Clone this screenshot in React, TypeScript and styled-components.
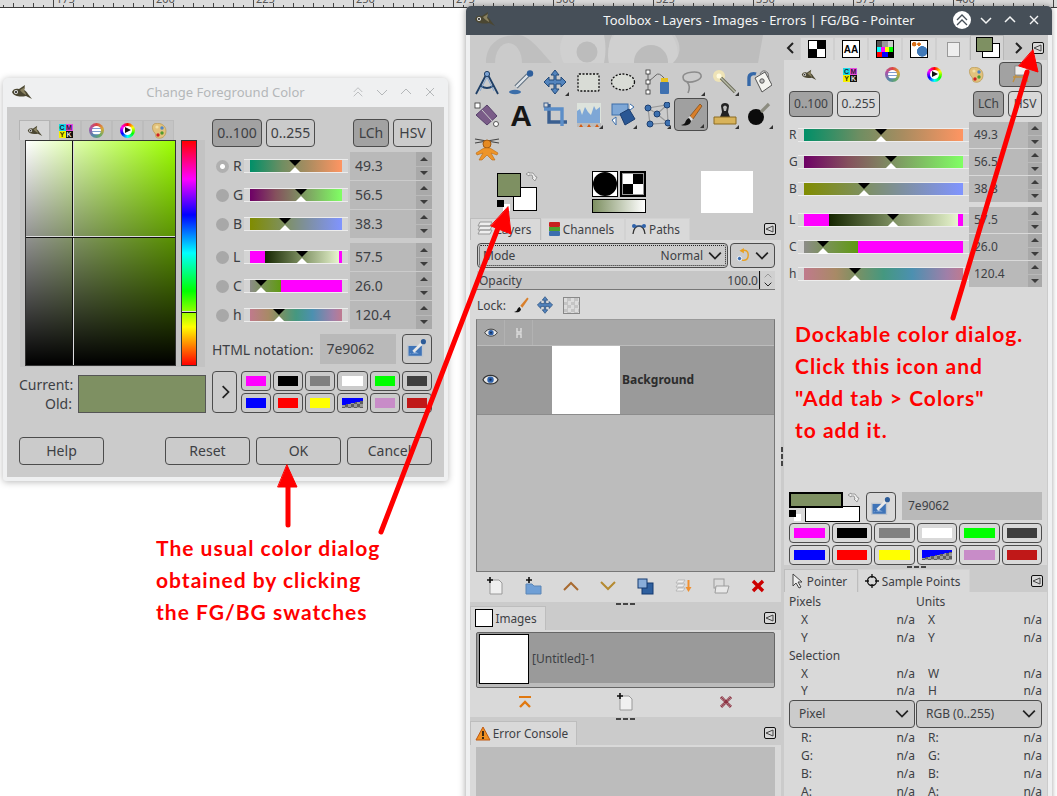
import React from "react";
import styled, { createGlobalStyle } from "styled-components";

const GlobalStyle = createGlobalStyle`
  html, body { margin: 0; padding: 0; background: #fff; }
  * { box-sizing: border-box; }
`;

const INK = "#3d4044";

const Desktop = styled.div`
  position: relative;
  width: 1057px;
  height: 796px;
  overflow: hidden;
  background: #fff;
  font-family: "Noto Sans", sans-serif;
  color: ${INK};
`;

const RulerSvg = styled.svg`
  display: block;
  width: 1057px;
  height: 8px;
  background: #dcdcdc;
`;

/* ---------- shared widgets ---------- */

const Btn = styled.div<{ $on?: boolean; $w?: number; $h?: number; $fs?: number }>`
  display: flex;
  align-items: center;
  justify-content: center;
  flex: none;
  width: ${(p) => (p.$w ? `${p.$w}px` : "auto")};
  height: ${(p) => p.$h ?? 28}px;
  font-size: ${(p) => p.$fs ?? 14}px;
  padding-bottom: 1px;
  border: 1px solid #4c4c4c;
  border-radius: 4px;
  background: ${(p) => (p.$on ? "#a2a2a2" : "transparent")};
`;

const SpinBox = styled.div<{ $big?: boolean }>`
  display: flex;
  flex: 1;
  margin-left: ${(p) => (p.$big ? 2 : 0)}px;
  height: ${(p) => (p.$big ? 28 : 26)}px;
  background: #b9b9b9;
  font-size: ${(p) => (p.$big ? 14 : 12)}px;
`;

const SpinValue = styled.div`
  flex: 1;
  display: flex;
  align-items: center;
  padding: 0 0 1px 5px;
`;

const SpinArrows = styled.div<{ $big?: boolean }>`
  width: ${(p) => (p.$big ? 16 : 14)}px;
  display: flex;
  flex-direction: column;
  background: #a9a9a9;
`;

const SpinArrow = styled.div<{ $down?: boolean }>`
  flex: 1;
  display: flex;
  align-items: center;
  justify-content: center;
  &::after {
    content: "";
    border-left: 4px solid transparent;
    border-right: 4px solid transparent;
    ${(p) => (p.$down ? "border-top" : "border-bottom")}: 4px solid #3c3c3c;
  }
  & + & {
    border-top: 1px solid #b9b9b9;
  }
`;

const Track = styled.div<{ $w?: number }>`
  position: relative;
  flex: ${(p) => (p.$w ? "none" : "1")};
  width: ${(p) => (p.$w ? `${p.$w}px` : "auto")};
  height: 14px;
  padding: 1px 6px;
  background: linear-gradient(#ededed, #ededed) top / 100% 1px no-repeat,
    linear-gradient(#ededed, #ededed) bottom / 100% 1px no-repeat, #d4d4d4;
`;

const Bar = styled.div<{ $bg: string }>`
  height: 12px;
  background: ${(p) => p.$bg};
`;

const Mark = styled.div<{ $pos: number }>`
  position: absolute;
  top: 0;
  bottom: 0;
  left: calc(6px + (100% - 12px) * ${(p) => p.$pos});
  &::before,
  &::after {
    content: "";
    position: absolute;
    left: -6px;
    border-left: 6px solid transparent;
    border-right: 6px solid transparent;
  }
  &::before {
    top: 1px;
    border-top: 6px solid #000;
  }
  &::after {
    bottom: 0;
    border-bottom: 6px solid #fff;
  }
`;

const SwatchGrid = styled.div`
  display: grid;
  grid-template-columns: repeat(6, 1fr);
  gap: 2px;
  flex: 1;
  grid-auto-rows: 20px;
`;

const SwatchCell = styled.div`
  border: 1px solid #4c4c4c;
  border-radius: 4px;
  padding: 4px 4px;
  display: flex;
`;

const SwatchFill = styled.div<{ $c: string }>`
  flex: 1;
  background: ${(p) => p.$c};
`;

const SWATCHES = [
  "#ff00ff",
  "#000000",
  "#808080",
  "#ffffff",
  "#00ff00",
  "#3e3e3e",
  "#0000ff",
  "#ff0000",
  "#ffff00",
  "linear-gradient(168deg, #0000ff 50%, transparent 51%), repeating-conic-gradient(#5e5e5e 0 25%, #9a9a9a 0 50%) 0 0 / 6px 6px",
  "#c88cc8",
  "#c01818",
];

const Swatches = () => (
  <SwatchGrid>
    {SWATCHES.map((c, i) => (
      <SwatchCell key={i}>
        <SwatchFill $c={c} />
      </SwatchCell>
    ))}
  </SwatchGrid>
);

const CHANNELS = [
  { k: "R", v: "49.3", pos: 0.484, bg: "linear-gradient(90deg,#008f68,#6f8e62 35%,#a88c60 62%,#ff9562)" },
  { k: "G", v: "56.5", pos: 0.55, bg: "linear-gradient(90deg,#6e0066,#85515d 28%,#7e9062 55%,#80ff64)" },
  { k: "B", v: "38.3", pos: 0.376, bg: "linear-gradient(90deg,#808c00,#7e9062 38%,#7e90a0 62%,#8094ff)" },
  {
    k: "L",
    v: "57.5",
    pos: 0.56,
    bg: "linear-gradient(90deg,#ff00ff 16%,#152500 16%,#7e9062 56%,#e8f5cf 97%,#ff00ff 97%)",
  },
  { k: "C", v: "26.0", pos: 0.118, bg: "linear-gradient(90deg,#8c8c88,#5f9a10 34%,#ff00ff 34%)" },
  {
    k: "h",
    v: "120.4",
    pos: 0.32,
    bg: "linear-gradient(90deg,#c07a8c,#a88a66 20%,#7e9062 32%,#459880 50%,#4c90b0 68%,#a07fa8 90%,#bf7a90)",
  },
];

const Chevron = ({ d = "down", size = 12, color = "#222", w = 1.5 }: { d?: string; size?: number; color?: string; w?: number }) => {
  const pts: Record<string, string> = {
    down: "1,4 6,9 11,4",
    up: "1,8 6,3 11,8",
    left: "8,1 3,6 8,11",
    right: "4,1 9,6 4,11",
  };
  return (
    <svg width={size} height={size} viewBox="0 0 12 12">
      <polyline points={pts[d]} fill="none" stroke={color} strokeWidth={w} />
    </svg>
  );
};

/* ---------- icons ---------- */

const Wilber = ({ w = 22 }: { w?: number }) => (
  <svg width={w} height={(w * 16) / 22} viewBox="0 0 22 16">
    <path d="M1 8C2 5 5 4 8 5l6-4-1 5c2 1 3 2 4 4l4 5-6-3c-5 1-12 1-14-4z" fill="#4b4732" />
    <path d="M9 6l5-3-1 4c1 1 2 2 2 4-3-2-5-3-6-5z" fill="#8a8260" />
    <circle cx="5" cy="8" r="2" fill="#e8e8e8" />
    <circle cx="5" cy="8" r="1" fill="#111" />
  </svg>
);

const CmykCell = styled.span<{ $bg: string; $c: string }>`
  display: flex;
  align-items: center;
  justify-content: center;
  background: ${(p) => p.$bg};
  color: ${(p) => p.$c};
  font: bold 7px "Liberation Sans", sans-serif;
`;

const CmykWrap = styled.div`
  display: grid;
  grid-template-columns: 7px 7px;
  grid-auto-rows: 7px;
`;

const Cmyk = () => (
  <CmykWrap>
    <CmykCell $bg="#19d8e8" $c="#123">C</CmykCell>
    <CmykCell $bg="#e84ce0" $c="#313">M</CmykCell>
    <CmykCell $bg="#f6f000" $c="#330">Y</CmykCell>
    <CmykCell $bg="#111" $c="#ddd">K</CmykCell>
  </CmykWrap>
);

const Wheel = styled.div`
  position: relative;
  width: 15px;
  height: 15px;
  border-radius: 50%;
  background: conic-gradient(#d44, #d8a838, #6a6, #58a, #a5a, #d44);
  &::after {
    content: "";
    position: absolute;
    inset: 3px;
    border-radius: 50%;
    background: repeating-linear-gradient(#fff 0 2px, #7f9fd0 2px 3px);
  }
`;

const Ring = styled.div`
  position: relative;
  width: 15px;
  height: 15px;
  border-radius: 50%;
  background: conic-gradient(#f00, #ff0, #0f0, #0ff, #00f, #f0f, #f00);
  &::after {
    content: "";
    position: absolute;
    inset: 3px;
    border-radius: 50%;
    background: #fff;
  }
  &::before {
    content: "";
    position: absolute;
    z-index: 1;
    left: 5px;
    top: 4px;
    border-left: 6px solid #111;
    border-top: 3.5px solid transparent;
    border-bottom: 3.5px solid transparent;
  }
`;

const Palette = () => (
  <svg width="16" height="16" viewBox="0 0 16 16">
    <path d="M3 1c4-2 12 0 12 7 0 6-5 8-8 7-3 0-2-3-3-5C2 9 0 3 3 1z" fill="#e2c27c" stroke="#b8974f" strokeWidth=".7" />
    <circle cx="6" cy="4" r="1.6" fill="#f0e0a8" />
    <circle cx="11" cy="5" r="1.7" fill="#4f86c6" />
    <circle cx="11" cy="10" r="1.7" fill="#4e9a2e" />
    <circle cx="7" cy="12" r="1.7" fill="#d02020" />
  </svg>
);

const PrinterEasel = () => (
  <svg width="20" height="18" viewBox="0 0 20 18">
    <rect x="4" y="1" width="13" height="9" fill="#eee" stroke="#777" strokeWidth=".7" />
    <path d="M2 12h15M5 10l-3 7M14 10l3 7" stroke="#c09040" strokeWidth="1.4" />
  </svg>
);

const Picker = ({ size = 22 }: { size?: number }) => (
  <svg width={size} height={size} viewBox="0 0 24 24">
    <path d="M2 8h16v12H2z" fill="#3f74b8" stroke="#bfc6cf" strokeWidth="1.5" />
    <path d="M4 18l6-3 4 2H4z" fill="#8fb1dd" />
    <path d="M8 15l9-9" stroke="#e8e8e8" strokeWidth="3" />
    <circle cx="19" cy="4" r="2.8" fill="#2c5b98" />
  </svg>
);

const MenuBtn = styled.div`
  width: 12px;
  height: 12px;
  flex: none;
  border: 1px solid #111;
  border-radius: 2px;
  background: #d8d8d8;
  display: flex;
  align-items: center;
  justify-content: center;
`;

const DockMenu = () => (
  <MenuBtn>
    <svg width="10" height="10" viewBox="0 0 10 10">
      <path d="M1 5l7-3v6z" fill="none" stroke="#444" strokeWidth="1" />
    </svg>
  </MenuBtn>
);

const ti = { width: 26, height: 26, viewBox: "0 0 26 26" };
const TOOLS: { el: React.ReactNode; corner?: boolean; on?: boolean }[] = [
  {
    el: (
      <svg {...ti}>
        <path d="M13 4L2 25M13 4l11 21M7 17q6 4 12 0" fill="none" stroke="#1f3f66" strokeWidth="1.8" />
        <path d="M13 8l-7 14M13 8l7 14" stroke="#6f9ad0" strokeWidth=".8" />
        <circle cx="13" cy="5" r="2.6" fill="#7da3d3" stroke="#1f3f66" />
      </svg>
    ),
  },
  {
    el: (
      <svg {...ti}>
        <path d="M8 18L20 6" stroke="#5d6d7d" strokeWidth="4.4" />
        <path d="M8 18L20 6" stroke="#dfe5ea" strokeWidth="2.4" />
        <circle cx="22" cy="4.5" r="3.2" fill="#2f5f9c" />
        <ellipse cx="7" cy="23" rx="6" ry="2.2" fill="#3c6ea9" />
      </svg>
    ),
  },
  {
    el: (
      <svg {...ti}>
        <path
          d="M13 1l4 5h-3v5h5V8l5 5-5 5v-3h-5v5h3l-4 5-4-5h3v-5H7v3l-5-5 5-5v3h5V6H9z"
          fill="#5384bd"
          stroke="#234a7a"
        />
      </svg>
    ),
    corner: true,
  },
  {
    el: (
      <svg {...ti}>
        <rect x="2" y="5" width="21" height="17" rx="1" fill="#d9dcd6" stroke="#111" strokeWidth="1.3" strokeDasharray="2 1.5" />
      </svg>
    ),
  },
  {
    el: (
      <svg {...ti}>
        <ellipse cx="13" cy="13" rx="11.5" ry="8" fill="#d9dcd6" stroke="#111" strokeWidth="1.3" strokeDasharray="2 1.5" />
      </svg>
    ),
  },
  {
    el: (
      <svg {...ti}>
        <path d="M4 4v18M5 12q4-3 7-6t8 3" fill="none" stroke="#666" strokeWidth="1" />
        <rect x="2" y="1" width="4" height="4" fill="#fff" stroke="#333" strokeWidth=".8" />
        <rect x="2" y="11" width="4" height="4" fill="#fff" stroke="#333" strokeWidth=".8" />
        <rect x="2" y="21" width="4" height="4" fill="#fff" stroke="#333" strokeWidth=".8" />
        <rect x="16" y="13" width="9" height="12" rx="1" fill="#3f71b0" />
        <rect x="17" y="9" width="7" height="4" fill="#e6c020" />
      </svg>
    ),
  },
  {
    el: (
      <svg {...ti}>
        <path d="M5 8c0-5 16-7 18-2s-11 9-16 6c-2-1-2-3-2-4zM9 13q4 4 1 11" fill="none" stroke="#8c8c8c" strokeWidth="1.6" />
      </svg>
    ),
    corner: true,
  },
  {
    el: (
      <svg {...ti}>
        <circle cx="7" cy="7" r="6" fill="#f6e8b0" opacity=".8" />
        <circle cx="7" cy="7" r="2.5" fill="#fffbe0" />
        <path d="M9 9l14 14" stroke="#6a6a58" strokeWidth="3.2" />
        <path d="M9 9l14 14" stroke="#b8bba8" strokeWidth="1.4" />
      </svg>
    ),
    corner: true,
  },
  {
    el: (
      <svg {...ti}>
        <path d="M3 17V9c0-4 4-5 7-4" fill="none" stroke="#3568a8" strokeWidth="3.4" />
        <path d="M9 9l10-6 7 13-10 7z" fill="#f4f4f0" stroke="#555" />
        <circle cx="16" cy="12" r="2.2" fill="#bbb" stroke="#555" />
        <path d="M14 5q3-6 8-1l1 6" fill="none" stroke="#777" />
      </svg>
    ),
  },
  {
    el: (
      <svg {...ti}>
        <path d="M2 13l11-10 10 11-10 9z" fill="#7a5c88" stroke="#56406a" />
        <path d="M8 8l10 11" stroke="#ccc" />
        <rect x="1" y="1" width="5" height="5" fill="#fff" stroke="#333" strokeWidth=".8" />
        <circle cx="22" cy="22" r="2.5" fill="#fff" stroke="#333" strokeWidth=".8" />
      </svg>
    ),
  },
  {
    el: (
      <svg {...ti}>
        <text x="13" y="24" textAnchor="middle" fontFamily="Liberation Sans" fontWeight="bold" fontSize="30" fill="#161616">
          A
        </text>
      </svg>
    ),
  },
  {
    el: (
      <svg {...ti}>
        <path d="M7 2v18h18" fill="none" stroke="#3a5f90" strokeWidth="3.4" />
        <path d="M2 7h18v17" fill="none" stroke="#5c8ec8" strokeWidth="3.4" />
        <rect x="2" y="1" width="4" height="4" fill="#dcdcdc" stroke="#3a5f90" />
      </svg>
    ),
  },
  {
    el: (
      <svg {...ti}>
        <rect x="1" y="1" width="24" height="20" fill="#dde3dc" />
        <path d="M1 21V9l3-2 2 6 3-8 3 5 3 3 3-9 2 4 4-3v16z" fill="#7ea7d6" />
        <rect x="1" y="21" width="24" height="4" fill="#bbb" />
        <path d="M3 25l2-3 2 3zM11 25l2-3 2 3zM19 25l2-3 2 3z" fill="#d55a10" />
      </svg>
    ),
    corner: true,
  },
  {
    el: (
      <svg {...ti}>
        <rect x="2" y="2" width="16" height="11" fill="#7ea7d6" stroke="#3c6ea9" />
        <path d="M10 12l9-5 6 10-10 6z" fill="#2a5794" stroke="#1d3f70" />
        <path d="M20 2l4 3-4 3M2 18l4-3v8z" fill="#fff" stroke="#3c6ea9" />
      </svg>
    ),
    corner: true,
  },
  {
    el: (
      <svg {...ti}>
        <path d="M4 6l19-3 1 18-18 1zM4 6l9 6 11 9M13 12l10-9" fill="none" stroke="#999" strokeWidth="1.2" />
        {[
          [4, 6],
          [23, 3],
          [24, 21],
          [6, 22],
          [13, 12],
        ].map(([x, y]) => (
          <circle key={x} cx={x} cy={y} r="3" fill="#3c70b0" stroke="#1d3f70" />
        ))}
      </svg>
    ),
    corner: true,
  },
  {
    el: (
      <svg {...ti}>
        <path d="M22 2l2 2-9 13-3-3z" fill="#d97f2a" stroke="#7a4612" strokeWidth=".7" />
        <path d="M12 14l3 3-2 2-3-3z" fill="#ddd" />
        <path d="M11 16c-2 1-3 2-4 5-1 1-3 2-4 2 3 1 9 1 10-4z" fill="#111" />
      </svg>
    ),
    corner: true,
    on: true,
  },
  {
    el: (
      <svg {...ti}>
        <path d="M9 4c0-4 8-4 8 0l-1 6 2 5H8l2-5z" fill="#222" />
        <path d="M11 5q2-3 4 0l-1 4h-2z" fill="#bbb" />
        <path d="M2 15h22v7H2z" fill="#d8b35a" stroke="#8a6a22" />
      </svg>
    ),
    corner: true,
  },
  {
    el: (
      <svg {...ti}>
        <circle cx="10" cy="15" r="8" fill="#0b0b0b" />
        <path d="M15 10l8-8" stroke="#8c8c80" strokeWidth="3.2" />
      </svg>
    ),
    corner: true,
  },
  {
    el: (
      <svg {...ti}>
        <path d="M1 4l24 4M25 4L1 8" stroke="#444" strokeWidth="1.2" />
        <circle cx="13" cy="9" r="4" fill="#e58a22" stroke="#a35a10" />
        <path d="M10 13h6l8 5-1 2-6-2 4 7h-3l-5-5-5 5H5l4-7-6 2-1-2z" fill="#ee9428" stroke="#b86a14" strokeWidth=".6" />
      </svg>
    ),
  },
];

/* ---------- dialog window ---------- */

const DialogWindow = styled.section`
  position: absolute;
  left: 3px;
  top: 78px;
  width: 445px;
  height: 403px;
  border-radius: 5px 5px 3px 3px;
  background: #eff0f1;
  box-shadow: 0 1px 7px rgba(0, 0, 0, 0.28);
  padding: 0 4px 4px;
`;

const DialogTitle = styled.header`
  position: relative;
  height: 29px;
  display: flex;
  align-items: center;
  justify-content: center;
  font-size: 13px;
  color: #b4b7b9;
  padding-bottom: 2px;
`;

const TitleIcon = styled.div<{ $l: number; $t: number }>`
  position: absolute;
  left: ${(p) => p.$l}px;
  top: ${(p) => p.$t}px;
`;

const TitleBtns = styled.div<{ $right: number }>`
  position: absolute;
  right: ${(p) => p.$right}px;
  top: 0;
  height: 28px;
  display: flex;
  gap: 12px;
  align-items: center;
`;

const DialogBody = styled.div`
  height: 370px;
  background: #cbcbcb;
  padding: 12px;
`;

const TopGrid = styled.div`
  display: grid;
  grid-template-columns: 186px 220px;
  column-gap: 7px;
  height: 249px;
`;

const SelectorTabs = styled.div`
  display: flex;
  height: 21px;
  padding-top: 1px;
`;

const SelTab = styled.div<{ $on?: boolean }>`
  width: 31px;
  display: flex;
  align-items: center;
  justify-content: center;
  background: ${(p) => (p.$on ? "#d5d5d5" : "#c4c4c4")};
  border: 1px solid ${(p) => (p.$on ? "#b4b4b4" : "#bcbcbc")};
  border-bottom: 0;
`;

const SelectorBox = styled.div`
  margin-left: 1px;
  height: 227px;
  background: #c3c3c3;
  display: flex;
  gap: 5px;
  padding: 0 5px;
`;

const ColorSquare = styled.div`
  position: relative;
  width: 151px;
  height: 226px;
  border: 1px solid #333;
  background: linear-gradient(to top, #000, rgba(0, 0, 0, 0)), linear-gradient(to right, #fff, #9cff00);
  &::before {
    content: "";
    position: absolute;
    left: 46px;
    top: 0;
    bottom: 0;
    width: 2px;
    background: linear-gradient(90deg, #111 50%, #ddd 50%);
  }
  &::after {
    content: "";
    position: absolute;
    top: 95px;
    left: 0;
    right: 0;
    height: 2px;
    background: linear-gradient(#ddd 50%, #111 50%);
  }
`;

const HueBar = styled.div`
  position: relative;
  width: 16px;
  height: 226px;
  border: 1px solid #333;
  background: linear-gradient(#f00, #f0f 17%, #00f 33%, #0ff 50%, #0f0 67%, #ff0 83%, #f00);
  &::after {
    content: "";
    position: absolute;
    top: 170px;
    left: 0;
    right: 0;
    height: 2px;
    background: linear-gradient(#ddd 50%, #111 50%);
  }
`;

const RightCol = styled.div`
  display: flex;
  flex-direction: column;
`;

const ModeRow = styled.div`
  display: flex;
  gap: 4px;
`;

const Spacer = styled.div`
  flex: 1;
`;

const SliderGroup = styled.div`
  display: flex;
  flex-direction: column;
  gap: 1px;
  margin-top: 5px;
`;

const SliderRow = styled.div`
  display: flex;
  align-items: center;
`;

const Radio = styled.div<{ $on?: boolean }>`
  width: 13px;
  height: 13px;
  margin: 0 4px;
  border-radius: 50%;
  background: ${(p) => (p.$on ? "radial-gradient(#fff 2px, #b0b0b0 3px)" : "#a8a8a8")};
`;

const ChanLabel = styled.div<{ $big?: boolean }>`
  width: ${(p) => (p.$big ? 11 : 9)}px;
  font-size: ${(p) => (p.$big ? 14 : 12)}px;
  flex: none;
  padding-bottom: 1px;
`;

const HtmlRow = styled.div`
  margin-top: 5px;
  display: flex;
  align-items: center;
  height: 30px;
  font-size: 14px;
`;

const HexEntry = styled.div<{ $w?: number; $ml?: number; $fs?: number; $h?: number }>`
  width: ${(p) => (p.$w ? `${p.$w}px` : "auto")};
  flex: ${(p) => (p.$w ? "none" : "1")};
  margin-left: ${(p) => p.$ml ?? 0}px;
  height: ${(p) => p.$h ?? 30}px;
  background: #b9b9b9;
  font-size: ${(p) => p.$fs ?? 14}px;
  display: flex;
  align-items: center;
  padding: 0 0 1px 6px;
`;

const CurrentRow = styled.div`
  margin-top: 3px;
  height: 42px;
  display: grid;
  grid-template-columns: 187px 26px 1fr;
  column-gap: 6px;
`;

const CurrentBox = styled.div`
  display: flex;
  padding-top: 4px;
  gap: 6px;
  align-items: stretch;
`;

const CurLabels = styled.div`
  width: 53px;
  text-align: right;
  font-size: 14px;
  line-height: 19px;
`;

const CurSwatch = styled.div`
  flex: 1;
  background: #7e9062;
  border: 1px solid #555;
`;

const MoreBtn = styled(Btn)`
  height: 42px;
  width: 25px;
`;

const SwatchWrap = styled.div`
  display: flex;
  margin-left: -3px;
`;

const FooterRow = styled.div`
  margin-top: 24px;
  display: flex;
  gap: 6px;
`;

/* ---------- toolbox window ---------- */

const ToolWindow = styled.section`
  position: absolute;
  left: 466px;
  top: 6px;
  width: 586px;
  height: 800px;
  border-radius: 5px 5px 0 0;
  background: #eff0f1;
  box-shadow: -1px 0 7px rgba(0, 0, 0, 0.28), 1px 0 4px rgba(0, 0, 0, 0.12);
`;

const DarkTitle = styled.header`
  position: relative;
  height: 29px;
  border-radius: 5px 5px 0 0;
  background: #464f58;
  color: #f4f5f5;
  font-size: 13px;
  padding-bottom: 2px;
  display: flex;
  align-items: center;
  justify-content: center;
`;

const WhiteDot = styled.div`
  width: 18px;
  height: 18px;
  margin-right: -3px;
  border-radius: 50%;
  background: #fff;
  display: flex;
  align-items: center;
  justify-content: center;
`;

const Columns = styled.div`
  display: flex;
  height: 771px;
  padding: 0 4px;
`;

const LeftDock = styled.div`
  width: 311px;
  flex: none;
  background: #cbcbcb;
  display: flex;
  flex-direction: column;
`;

const RightDock = styled.div`
  flex: 1;
  background: #cbcbcb;
  display: flex;
  flex-direction: column;
  padding-left: 3px;
  position: relative;
`;

const ToolArea = styled.div`
  position: relative;
  height: 183px;
  padding-top: 30px;
`;

const Watermark = styled.svg`
  position: absolute;
  left: 0;
  top: 0;
`;

const ToolGrid = styled.div`
  position: relative;
  display: grid;
  grid-template-columns: repeat(9, 34px);
  grid-auto-rows: 33px;
`;

const ToolCell = styled.div<{ $on?: boolean; $corner?: boolean }>`
  position: relative;
  display: flex;
  align-items: center;
  justify-content: center;
  border-radius: 4px;
  ${(p) => p.$on && "background:#a0a0a0; border:1px solid #4c4c4c;"}
  ${(p) =>
    p.$corner &&
    `&::after{content:"";position:absolute;right:3px;bottom:2px;border-left:4px solid transparent;border-bottom:4px solid #333;}`}
`;

const IndicatorRow = styled.div`
  display: flex;
  margin-top: 7px;
  height: 42px;
  position: relative;
`;

const FgBgBox = styled.div`
  position: relative;
  width: 45px;
  height: 42px;
  margin-left: 27px;
`;

const Chip = styled.div<{ $l: number; $t: number; $w: number; $h: number; $c: string; $bw?: number; $z?: number }>`
  position: absolute;
  left: ${(p) => p.$l}px;
  top: ${(p) => p.$t}px;
  width: ${(p) => p.$w}px;
  height: ${(p) => p.$h}px;
  background: ${(p) => p.$c};
  border: ${(p) => p.$bw ?? 1}px solid #000;
  z-index: ${(p) => p.$z ?? 0};
`;

const WhiteChip = styled(Chip)`
  border: 0;
`;

const SwapArrows = styled.svg<{ $l: number }>`
  position: absolute;
  left: ${(p) => p.$l}px;
  top: 0;
`;

const BrushBox = styled.div`
  margin-left: 50px;
  width: 54px;
  display: grid;
  grid-template-columns: 26px 26px;
  grid-template-rows: 26px 14px;
  gap: 2px;
`;

const BrushCell = styled.div`
  border: 1px solid #000;
  background: #fff;
  position: relative;
  overflow: hidden;
  &::after {
    content: "";
    position: absolute;
    inset: 0;
    border-radius: 50%;
    background: #000;
  }
`;

const PatternCell = styled.div`
  border: 2px solid #000;
  outline: 1px solid #999;
  outline-offset: -3px;
  background: repeating-conic-gradient(#000 0 25%, #fff 0 50%) 0 0 / 22px 22px;
`;

const GradientCell = styled.div`
  grid-column: 1 / 3;
  border: 1px solid #000;
  background: linear-gradient(90deg, #7e9062, #fff);
`;

const ImagePreview = styled.div`
  margin-left: 55px;
  width: 52px;
  height: 42px;
  background: #fff;
`;

const TabStrip = styled.div<{ $h: number }>`
  position: relative;
  display: flex;
  align-items: stretch;
  height: ${(p) => p.$h}px;
  flex: none;
  padding-right: 5px;
`;

const DockTab = styled.div<{ $w: number; $on?: boolean }>`
  width: ${(p) => p.$w}px;
  display: flex;
  align-items: center;
  justify-content: center;
  gap: 2px;
  font-size: 11.8px;
  padding: 0 4px 1px 0;
  background: #d9d9d9;
  border: 1px solid ${(p) => (p.$on ? "#bdbdbd" : "#d2d2d2")};
  border-bottom: 0;
`;

const TabMenuSlot = styled.div`
  margin-left: auto;
  align-self: center;
  display: flex;
`;

const Panel = styled.div<{ $h?: number }>`
  ${(p) => (p.$h ? `height:${p.$h}px;flex:none;` : "flex:1;")}
  background: #d9d9d9;
  padding: 0 6px;
  display: flex;
  flex-direction: column;
`;

const Combo = styled.div<{ $w?: number; $h?: number; $pl?: number }>`
  ${(p) => (p.$w ? `width:${p.$w}px;flex:none;` : "flex:1;")}
  height: ${(p) => p.$h ?? 25}px;
  border: 1px solid #4c4c4c;
  border-radius: 4px;
  background: #cbcbcb;
  display: flex;
  align-items: center;
  padding: 0 5px 1px ${(p) => p.$pl ?? 5}px;
  font-size: 12px;
  gap: 5px;
`;

const DottedCombo = styled(Combo)`
  margin-left: 1px;
  outline: 1px dotted #222;
  outline-offset: -3px;
`;

const ComboRight = styled.span`
  margin-left: auto;
  display: flex;
  align-items: center;
  gap: 5px;
`;

const ComboRow = styled.div`
  margin-top: 3px;
  display: flex;
  gap: 2px;
`;

const OpacityRow = styled.div`
  margin: 3px 0 0 1px;
  height: 19px;
  display: flex;
  align-items: center;
  justify-content: space-between;
  background: #c6c6c6;
  border-bottom: 1px solid #777;
  font-size: 12px;
  padding-left: 2px;
`;

const OpacityValue = styled.div`
  display: flex;
  align-items: center;
  height: 100%;
`;

const Caret = styled.div`
  width: 1px;
  height: 18px;
  background: #111;
  margin: 0 1px;
`;

const MiniSpin = styled.div`
  width: 14px;
  height: 100%;
  background: #d0d0d0;
  display: flex;
  flex-direction: column;
  align-items: center;
  justify-content: center;
  line-height: 0;
`;

const LockRow = styled.div`
  margin: 5px 0 4px 1px;
  height: 20px;
  display: flex;
  align-items: center;
  gap: 6px;
  font-size: 12px;
`;

const Checker = styled.div`
  width: 17px;
  height: 17px;
  border: 1px solid #888;
  margin-left: 3px;
  background: repeating-conic-gradient(#c4c4c4 0 25%, #dcdcdc 0 50%) 0 0 / 7px 7px;
`;

const LayerList = styled.div`
  height: 253px;
  flex: none;
  background: #bcbcbc;
  border: 1px solid #777;
  border-top-color: #999;
`;

const LayerHead = styled.div`
  height: 26px;
  background: #a8a8a8;
  display: flex;
  border-bottom: 1px solid #bcbcbc;
`;

const HeadCell = styled.div`
  width: 28px;
  display: flex;
  align-items: center;
  justify-content: center;
  border-right: 1px solid #b2b2b2;
`;

const LayerRow = styled.div`
  height: 69px;
  background: #9a9a9a;
  display: flex;
  align-items: center;
  padding-left: 5px;
  border-bottom: 1px solid #8c8c8c;
`;

const LayerThumb = styled.div`
  width: 68px;
  height: 68px;
  background: #fff;
  margin-left: 53px;
  align-self: flex-start;
`;

const LayerName = styled.div`
  margin-left: 2px;
  padding-bottom: 2px;
  font-size: 12px;
  font-weight: 700;
  color: #2c2c2c;
`;

const Toolbar = styled.div<{ $h: number }>`
  height: ${(p) => p.$h}px;
  flex: none;
  display: flex;
  align-items: center;
  justify-content: space-around;
`;

const Grip = styled.div`
  height: 4px;
  flex: none;
  display: flex;
  align-items: center;
  justify-content: center;
  gap: 2px;
  & > i {
    width: 5px;
    height: 2px;
    background: #444;
  }
`;

const SmallWhite = styled.div`
  width: 18px;
  height: 18px;
  background: #fff;
  border: 1px solid #000;
`;

const ImageList = styled.div`
  margin-top: 2px;
  height: 56px;
  flex: none;
  background: linear-gradient(#9a9a9a 50px, #bcbcbc 50px);
  border: 1px solid #666;
  border-radius: 2px;
  display: flex;
  align-items: flex-start;
  padding: 1px 2px;
  font-size: 12px;
`;

const ImageThumb = styled.div`
  width: 50px;
  height: 50px;
  background: #fff;
  border: 1px solid #000;
`;

const ImageName = styled.div`
  margin: 16px 0 0 3px;
`;

const ConsoleList = styled.div`
  margin-top: 2px;
  flex: 1;
  background: #bcbcbc;
`;

const DockBar = styled.div`
  height: 25px;
  flex: none;
  display: flex;
  align-items: flex-end;
  padding-right: 4px;
  margin-left: -3px;
`;

const ArrowSlot = styled.div<{ $w: number }>`
  width: ${(p) => p.$w}px;
  height: 100%;
  flex: none;
  display: flex;
  align-items: center;
  justify-content: center;
`;

const DockIconTab = styled.div<{ $on?: boolean }>`
  width: 34px;
  height: ${(p) => (p.$on ? 25 : 23)}px;
  flex: none;
  position: relative;
  display: flex;
  align-items: center;
  justify-content: center;
  background: ${(p) => (p.$on ? "#d4d4d4" : "#d9d9d9")};
  border: 1px solid ${(p) => (p.$on ? "#b8b8b8" : "#cfcfcf")};
  border-bottom: 0;
`;

const BlackBox = styled.div`
  width: 18px;
  height: 18px;
  border: 1px solid #000;
  background: #fff;
  display: flex;
  align-items: center;
  justify-content: center;
  font: bold 10px "Liberation Sans", sans-serif;
  color: #000;
  overflow: hidden;
`;

const CheckFill = styled.div`
  width: 100%;
  height: 100%;
  background: repeating-conic-gradient(#000 0 25%, #fff 0 50%) 0 0 / 16px 16px;
`;

const PaletteFill = styled.div`
  width: 100%;
  height: 100%;
  background: linear-gradient(90deg, #0ff 25%, #f0f 25% 50%, #ff0 50% 75%, #0f0 75%) 0 6px / 100% 5px no-repeat,
    linear-gradient(90deg, #f00 33%, #00f 33% 66%, #000 66%) 0 11px / 100% 5px no-repeat,
    linear-gradient(90deg, #555 33%, #999 33% 66%, #ccc 66%) 0 0 / 100% 6px no-repeat;
`;

const DotsFill = styled.div`
  width: 100%;
  height: 100%;
  background: radial-gradient(circle at 70% 65%, #4079b8 5px, transparent 5.5px),
    radial-gradient(circle at 20% 20%, #d8701a 2px, transparent 2.5px),
    radial-gradient(circle at 50% 20%, #d8701a 1.5px, transparent 2px), #fff;
`;

const TabDoc = styled.div`
  width: 13px;
  height: 15px;
  background: #eee;
  border: 1px solid #999;
`;

const TabFg = styled.div`
  position: absolute;
  left: 5px;
  top: 1px;
  width: 17px;
  height: 15px;
  background: #7e9062;
  border: 1px solid #000;
  z-index: 1;
`;

const TabBg = styled.div`
  position: absolute;
  left: 11px;
  top: 7px;
  width: 18px;
  height: 15px;
  background: #fff;
  border: 1px solid #000;
`;

const ColorPanel = styled.div`
  height: 505px;
  flex: none;
  margin-right: 1px;
  background: #d9d9d9;
  padding: 2px 5px 0;
  display: flex;
  flex-direction: column;
`;

const ColorModes = styled.div`
  height: 25px;
  display: flex;
  align-items: center;
  flex: none;
`;

const ModeIcon = styled.div<{ $w: number }>`
  width: ${(p) => p.$w}px;
  display: flex;
  justify-content: center;
`;

const ActiveMode = styled(Btn)`
  margin-left: auto;
  width: 43px;
  height: 25px;
  background: #a2a2a2;
`;

const Row2 = styled(ModeRow)`
  margin-top: 4px;
  height: 26px;
  flex: none;
`;

const SwatchRow = styled.div`
  margin-top: 1px;
  height: 42px;
  display: flex;
  flex: none;
`;

const FgLine = styled.div`
  margin-top: auto;
  display: flex;
  align-items: flex-start;
  gap: 6px;
  height: 30px;
  flex: none;
`;

const SideFgBg = styled.div`
  position: relative;
  width: 71px;
  height: 30px;
  flex: none;
`;

const PointerPanel = styled.div`
  flex: 1;
  margin-right: 1px;
  background: #d9d9d9;
  padding: 1px 5px 0;
  font-size: 12px;
`;

const InfoGrid = styled.div<{ $row: number }>`
  display: grid;
  grid-template-columns: 126px 126px;
  column-gap: 1px;
  grid-auto-rows: ${(p) => p.$row}px;
  align-items: center;
`;

const InfoRow = styled.div`
  display: flex;
  justify-content: space-between;
  padding-left: 12px;
`;

const ComboGrid = styled.div`
  display: grid;
  grid-template-columns: 126px 126px;
  column-gap: 1px;
  height: 28px;
  margin: 0 0 1px;
`;

const SplitDots = styled.div`
  position: absolute;
  left: 0;
  top: 412px;
  display: flex;
  flex-direction: column;
  gap: 2px;
  & > i {
    width: 2px;
    height: 5px;
    background: #444;
  }
`;

/* ---------- annotations ---------- */

const Overlay = styled.svg`
  position: absolute;
  left: 0;
  top: 0;
  pointer-events: none;
  z-index: 5;
`;

const Note = styled.div<{ $l: number; $t: number; $ls: number }>`
  position: absolute;
  z-index: 6;
  left: ${(p) => p.$l}px;
  top: ${(p) => p.$t}px;
  color: #ff0000;
  font-family: "Lato", sans-serif;
  font-weight: 700;
  font-size: 21px;
  line-height: 32px;
  letter-spacing: ${(p) => p.$ls}px;
  white-space: pre;
`;

/* ---------- page ---------- */

const Ruler = () => {
  const ticks: React.ReactNode[] = [];
  for (let x = 3; x < 1057; x += 10) {
    const k = (x - 53 + 1000) % 100;
    const h = k === 0 ? 7 : k % 20 === 0 ? 4 : 2;
    ticks.push(<rect key={x} x={x} y={7 - h} width={1} height={h} fill="#444" />);
  }
  const labels = [175, 200, 225, 250, 275, 300, 325, 350, 375, 400];
  return (
    <RulerSvg viewBox="0 0 1057 8">
      {ticks}
      <rect x={0} y={7} width={1057} height={1} fill="#3c3c3c" />
      {labels.map((n, i) => (
        <text key={n} x={56 + i * 100} y={3} fontSize="11" fontFamily="Noto Sans" fill="#555">
          {n}
        </text>
      ))}
    </RulerSvg>
  );
};

const SliderStack = ({ big }: { big?: boolean }) => {
  const groups = [CHANNELS.slice(0, 3), CHANNELS.slice(3)];
  return (
    <>
      {groups.map((g, gi) => (
        <SliderGroup key={gi}>
          {g.map((c, i) => (
            <SliderRow key={c.k}>
              {big && <Radio $on={gi === 0 && i === 0} />}
              <ChanLabel $big={big}>{c.k}</ChanLabel>
              <Track $w={big ? 104 : 171}>
                <Bar $bg={c.bg} />
                <Mark $pos={c.pos} />
              </Track>
              <SpinBox $big={big}>
                <SpinValue>{c.v}</SpinValue>
                <SpinArrows $big={big}>
                  <SpinArrow />
                  <SpinArrow $down />
                </SpinArrows>
              </SpinBox>
            </SliderRow>
          ))}
        </SliderGroup>
      ))}
    </>
  );
};

const Eye = ({ size = 18 }: { size?: number }) => (
  <svg width={size} height={(size * 12) / 18} viewBox="0 0 18 12">
    <path d="M1 6c3-6 13-6 16 0-3 6-13 6-16 0z" fill="#e8e8e8" stroke="#333" strokeWidth="1.2" />
    <circle cx="9" cy="6" r="3.4" fill="#2e62ac" />
    <circle cx="9" cy="6" r="1.2" fill="#10284e" />
  </svg>
);

const NewDoc = () => (
  <svg width="17" height="18" viewBox="0 0 17 18">
    <path d="M3 3h9l3 3v11H3z" fill="#f0f0f0" stroke="#999" />
    <path d="M3 0v6M0 3h6" stroke="#111" strokeWidth="1.6" />
  </svg>
);

const LayerTools = () => (
  <Toolbar $h={28}>
    <NewDoc />
    <svg width="17" height="18" viewBox="0 0 17 18">
      <path d="M1 7h6l2 2h7v8H1z" fill="#6f9fd6" stroke="#5c86b6" />
      <path d="M4 0v6M1 3h6" stroke="#111" strokeWidth="1.6" />
    </svg>
    <svg width="16" height="10" viewBox="0 0 16 10">
      <path d="M1 9l7-7 7 7" fill="none" stroke="#a86a30" strokeWidth="2" />
    </svg>
    <svg width="16" height="10" viewBox="0 0 16 10">
      <path d="M1 1l7 7 7-7" fill="none" stroke="#b58a30" strokeWidth="2" />
    </svg>
    <svg width="17" height="17" viewBox="0 0 17 17">
      <rect x="5" y="5" width="11" height="11" fill="#2e5f9e" stroke="#143a70" />
      <rect x="1" y="1" width="9" height="9" fill="#89add9" stroke="#143a70" />
    </svg>
    <svg width="17" height="14" viewBox="0 0 17 14">
      <path d="M3 1h7l-2 3H1zM3 5h7L8 8H1zM3 9h7l-2 3H1z" fill="#f0f0f0" stroke="#aaa" strokeWidth=".7" />
      <path d="M13.5 1v7" stroke="#f09030" strokeWidth="2" />
      <path d="M10.5 8h6l-3 5z" fill="#f09030" />
    </svg>
    <svg width="17" height="16" viewBox="0 0 17 16" opacity="0.75">
      <rect x="1" y="1" width="10" height="9" fill="#ddd" stroke="#888" />
      <path d="M3 8h13l-2 7H2z" fill="#eee" stroke="#888" />
    </svg>
    <svg width="14" height="14" viewBox="0 0 14 14">
      <path d="M2 2l10 10M12 2L2 12" stroke="#cc0000" strokeWidth="3.4" />
    </svg>
  </Toolbar>
);

const ColorDialog = () => (
  <DialogWindow>
    <DialogTitle>
      <TitleIcon $l={4} $t={6}>
        <Wilber />
      </TitleIcon>
      <span>Change Foreground Color</span>
      <TitleBtns $right={8}>
        <svg width="12" height="12" viewBox="0 0 14 12">
          <path d="M2 6l5-5 5 5M2 11l5-5 5 5" fill="none" stroke="#b4b7b9" />
        </svg>
        <Chevron color="#b4b7b9" w={1} />
        <Chevron d="up" color="#b4b7b9" w={1} />
        <svg width="12" height="12" viewBox="0 0 12 12">
          <path d="M2 2l8 8M10 2l-8 8" stroke="#b4b7b9" />
        </svg>
      </TitleBtns>
    </DialogTitle>
    <DialogBody>
      <TopGrid>
        <div>
          <SelectorTabs>
            <SelTab $on>
              <Wilber w={16} />
            </SelTab>
            <SelTab>
              <Cmyk />
            </SelTab>
            <SelTab>
              <Wheel />
            </SelTab>
            <SelTab>
              <Ring />
            </SelTab>
            <SelTab>
              <Palette />
            </SelTab>
          </SelectorTabs>
          <SelectorBox>
            <ColorSquare />
            <HueBar />
          </SelectorBox>
        </div>
        <RightCol>
          <ModeRow>
            <Btn $on $w={50}>
              0..100
            </Btn>
            <Btn $w={49}>0..255</Btn>
            <Spacer />
            <Btn $on $w={36}>
              LCh
            </Btn>
            <Btn $w={39}>HSV</Btn>
          </ModeRow>
          <SliderStack big />
          <HtmlRow>
            <span>HTML notation:</span>
            <HexEntry $w={76} $ml={7}>
              7e9062
            </HexEntry>
            <Spacer />
            <Btn $w={30} $h={30}>
              <Picker />
            </Btn>
          </HtmlRow>
        </RightCol>
      </TopGrid>
      <CurrentRow>
        <CurrentBox>
          <CurLabels>
            Current:
            <br />
            Old:
          </CurLabels>
          <CurSwatch />
        </CurrentBox>
        <MoreBtn>
          <Chevron d="right" size={14} />
        </MoreBtn>
        <SwatchWrap>
          <Swatches />
        </SwatchWrap>
      </CurrentRow>
      <FooterRow>
        <Btn $w={85}>Help</Btn>
        <Spacer />
        <Btn $w={85}>Reset</Btn>
        <Btn $w={85}>OK</Btn>
        <Btn $w={85}>Cancel</Btn>
      </FooterRow>
    </DialogBody>
  </DialogWindow>
);

const LeftColumn = () => (
  <LeftDock>
    <ToolArea>
      <Watermark width="311" height="28" viewBox="0 0 311 28">
        <path d="M16 28C16 10 28 0 48 0c12 0 24 18 34 28z" fill="#bfbfbf" />
        <path d="M25 28a13.500 20 0 0 1 27 0z" fill="#cbcbcb" />
        <circle cx="117" cy="14" r="27" fill="#d0d0d0" />
        <circle cx="117" cy="17" r="10.500" fill="#bcbcbc" />
        <path d="M134 0h8q-6 14-2 28h-6q3-14 0-28z" fill="#bfbfbf" />
        <circle cx="173" cy="20" r="35" fill="#d0d0d0" />
        <circle cx="181" cy="27" r="17" fill="#bcbcbc" />
        <path d="M205 0h88l-5 28h-85q12-12 2-28z" fill="#bdbdbd" />
      </Watermark>
      <ToolGrid>
        {TOOLS.map((t, i) => (
          <ToolCell key={i} $on={t.on} $corner={t.corner}>
            {t.el}
          </ToolCell>
        ))}
      </ToolGrid>
      <IndicatorRow>
        <FgBgBox>
          <Chip $l={16} $t={16} $w={24} $h={24} $c="#fff" />
          <Chip $l={0} $t={2} $w={24} $h={24} $c="#7e9062" $z={1} />
          <WhiteChip $l={6} $t={33} $w={7} $h={7} $c="#fff" />
          <Chip $l={0} $t={29} $w={7} $h={7} $c="#000" />
          <SwapArrows $l={28} width="13" height="12" viewBox="0 0 13 12">
            <path d="M1 3l3-2v1h4l3 4 1 0-2 4-3-3h1L7 4H4v1z" fill="#eee" stroke="#888" strokeWidth=".8" />
          </SwapArrows>
        </FgBgBox>
        <BrushBox>
          <BrushCell />
          <PatternCell />
          <GradientCell />
        </BrushBox>
        <ImagePreview />
      </IndicatorRow>
    </ToolArea>
    <TabStrip $h={22}>
      <DockTab $w={71} $on>
        <svg width="18" height="18" viewBox="0 0 18 18">
          <path d="M4 2h12l-2 4H2zM4 6h12l-2 4H2zM4 10h12l-2 4H2z" fill="#eee" stroke="#999" />
        </svg>
        Layers
      </DockTab>
      <DockTab $w={84}>
        <svg width="13" height="16" viewBox="0 0 13 16">
          <rect x="1" y="1" width="11" height="5" rx="1" fill="#c82020" />
          <rect x="1" y="6" width="11" height="4" fill="#4ea030" />
          <rect x="1" y="10" width="11" height="5" rx="1" fill="#3c6eb0" />
        </svg>
        Channels
      </DockTab>
      <DockTab $w={65}>
        <svg width="16" height="14" viewBox="0 0 16 14">
          <path d="M2 12q1-8 6-8t6 8" fill="none" stroke="#333" strokeWidth="1.3" />
          <circle cx="3" cy="4" r="2" fill="#2e62ac" />
          <circle cx="13" cy="4" r="2" fill="#2e62ac" />
          <path d="M3 4h10" stroke="#2e62ac" />
        </svg>
        Paths
      </DockTab>
      <TabMenuSlot>
        <DockMenu />
      </TabMenuSlot>
    </TabStrip>
    <Panel $h={362}>
      <ComboRow>
        <DottedCombo>
          Mode
          <ComboRight>
            Normal
            <Chevron size={14} />
          </ComboRight>
        </DottedCombo>
        <Combo $w={45}>
          <svg width="16" height="16" viewBox="0 0 16 16">
            <path d="M6 3q8-2 8 5t-7 6" fill="none" stroke="#e8a020" strokeWidth="1.6" />
            <path d="M9 0L4 3l5 3z" fill="#e8a020" />
            <circle cx="4" cy="12" r="2.5" fill="#3c6eb0" stroke="#fff" />
          </svg>
          <ComboRight>
            <Chevron size={14} />
          </ComboRight>
        </Combo>
      </ComboRow>
      <OpacityRow>
        Opacity
        <OpacityValue>
          100.0
          <Caret />
          <MiniSpin>
            <Chevron d="up" size={8} color="#999" />
            <Chevron size={8} />
          </MiniSpin>
        </OpacityValue>
      </OpacityRow>
      <LockRow>
        Lock:
        <svg width="18" height="18" viewBox="0 0 26 26">
          <path d="M22 2l2 2-9 13-3-3z" fill="#d97f2a" />
          <path d="M11 16c-2 1-3 2-4 5-1 1-3 2-4 2 3 1 9 1 10-4z" fill="#111" />
        </svg>
        <svg width="18" height="18" viewBox="0 0 26 26">
          <path
            d="M13 1l4 5h-3v5h5V8l5 5-5 5v-3h-5v5h3l-4 5-4-5h3v-5H7v3l-5-5 5-5v3h5V6H9z"
            fill="#5384bd"
            stroke="#234a7a"
          />
        </svg>
        <Checker />
      </LockRow>
      <LayerList>
        <LayerHead>
          <HeadCell>
            <Eye size={14} />
          </HeadCell>
          <HeadCell>
            <svg width="8" height="12" viewBox="0 0 8 12">
              <path d="M2 1v4h4V1M2 11V7h4v4" fill="none" stroke="#ddd" strokeWidth="1.4" />
            </svg>
          </HeadCell>
        </LayerHead>
        <LayerRow>
          <Eye size={17} />
          <LayerThumb />
          <LayerName>Background</LayerName>
        </LayerRow>
      </LayerList>
      <LayerTools />
    </Panel>
    <Grip>
      <i />
      <i />
      <i />
    </Grip>
    <TabStrip $h={24}>
      <DockTab $w={76} $on>
        <SmallWhite />
        Images
      </DockTab>
      <TabMenuSlot>
        <DockMenu />
      </TabMenuSlot>
    </TabStrip>
    <Panel $h={87}>
      <ImageList>
        <ImageThumb />
        <ImageName>[Untitled]-1</ImageName>
      </ImageList>
      <Toolbar $h={28}>
        <svg width="14" height="14" viewBox="0 0 14 14">
          <path d="M1 2h12" stroke="#e07810" strokeWidth="2" />
          <path d="M2 12l5-5 5 5" fill="none" stroke="#e07810" strokeWidth="2.4" />
        </svg>
        <NewDoc />
        <svg width="14" height="14" viewBox="0 0 14 14">
          <path d="M2 2l10 10M12 2L2 12" stroke="#8c3040" strokeWidth="3" strokeDasharray="1.2 .4" />
        </svg>
      </Toolbar>
    </Panel>
    <Grip>
      <i />
      <i />
      <i />
    </Grip>
    <TabStrip $h={24}>
      <DockTab $w={107} $on>
        <svg width="16" height="15" viewBox="0 0 16 15">
          <path d="M8 1l7 13H1z" fill="#f09020" stroke="#c05810" />
          <path d="M8 5v5M8 11v2" stroke="#111" strokeWidth="1.6" />
        </svg>
        Error Console
      </DockTab>
      <TabMenuSlot>
        <DockMenu />
      </TabMenuSlot>
    </TabStrip>
    <Panel>
      <ConsoleList />
    </Panel>
  </LeftDock>
);

const RightColumn = () => (
  <RightDock>
    <SplitDots>
      <i />
      <i />
      <i />
    </SplitDots>
    <DockBar>
      <ArrowSlot $w={19}>
        <Chevron d="left" size={12} w={2} />
      </ArrowSlot>
      <DockIconTab>
        <BlackBox>
          <CheckFill />
        </BlackBox>
      </DockIconTab>
      <DockIconTab>
        <BlackBox>AA</BlackBox>
      </DockIconTab>
      <DockIconTab>
        <BlackBox>
          <PaletteFill />
        </BlackBox>
      </DockIconTab>
      <DockIconTab>
        <BlackBox>
          <DotsFill />
        </BlackBox>
      </DockIconTab>
      <DockIconTab>
        <TabDoc />
      </DockIconTab>
      <DockIconTab $on>
        <TabFg />
        <TabBg />
      </DockIconTab>
      <ArrowSlot $w={27}>
        <Chevron d="right" size={12} w={2} />
      </ArrowSlot>
      <TabMenuSlot>
        <DockMenu />
      </TabMenuSlot>
    </DockBar>
    <ColorPanel>
      <ColorModes>
        <ModeIcon $w={40}>
          <Wilber w={16} />
        </ModeIcon>
        <ModeIcon $w={42}>
          <Cmyk />
        </ModeIcon>
        <ModeIcon $w={42}>
          <Wheel />
        </ModeIcon>
        <ModeIcon $w={42}>
          <Ring />
        </ModeIcon>
        <ModeIcon $w={42}>
          <Palette />
        </ModeIcon>
        <ActiveMode>
          <PrinterEasel />
        </ActiveMode>
      </ColorModes>
      <Row2>
        <Btn $on $w={44} $h={26} $fs={12}>
          0..100
        </Btn>
        <Btn $w={43} $h={26} $fs={12}>
          0..255
        </Btn>
        <Spacer />
        <Btn $on $w={31} $h={26} $fs={12}>
          LCh
        </Btn>
        <Btn $w={34} $h={26} $fs={12}>
          HSV
        </Btn>
      </Row2>
      <SliderStack />
      <FgLine>
        <SideFgBg>
          <Chip $l={16} $t={14} $w={55} $h={16} $c="#fff" />
          <Chip $l={0} $t={0} $w={54} $h={16} $c="#7e9062" $bw={2} $z={1} />
          <WhiteChip $l={5} $t={22} $w={7} $h={7} $c="#fff" />
          <Chip $l={0} $t={18} $w={7} $h={7} $c="#000" />
          <SwapArrows $l={58} width="13" height="12" viewBox="0 0 13 12">
            <path d="M1 3l3-2v1h4l3 4 1 0-2 4-3-3h1L7 4H4v1z" fill="#eee" stroke="#888" strokeWidth=".8" />
          </SwapArrows>
        </SideFgBg>
        <Btn $w={30} $h={30}>
          <Picker />
        </Btn>
        <HexEntry $fs={12} $h={28}>
          7e9062
        </HexEntry>
      </FgLine>
      <SwatchRow>
        <Swatches />
      </SwatchRow>
    </ColorPanel>
    <Grip>
      <i />
      <i />
      <i />
    </Grip>
    <TabStrip $h={23}>
      <DockTab $w={74} $on>
        <svg width="14" height="16" viewBox="0 0 14 16">
          <path d="M2 1v12l3-3 3 5 2-1-3-5h4z" fill="#eee" stroke="#444" />
        </svg>
        Pointer
      </DockTab>
      <DockTab $w={112}>
        <svg width="16" height="16" viewBox="0 0 16 16">
          <circle cx="8" cy="8" r="4.5" fill="none" stroke="#111" strokeWidth="1.3" />
          <path d="M8 1v4M8 11v4M1 8h4M11 8h4" stroke="#111" strokeWidth="1.3" />
        </svg>
        Sample Points
      </DockTab>
      <TabMenuSlot>
        <DockMenu />
      </TabMenuSlot>
    </TabStrip>
    <PointerPanel>
      <InfoGrid $row={17.8}>
        <div>Pixels</div>
        <div>Units</div>
        <InfoRow>
          <span>X</span>
          <span>n/a</span>
        </InfoRow>
        <InfoRow>
          <span>X</span>
          <span>n/a</span>
        </InfoRow>
        <InfoRow>
          <span>Y</span>
          <span>n/a</span>
        </InfoRow>
        <InfoRow>
          <span>Y</span>
          <span>n/a</span>
        </InfoRow>
        <div>Selection</div>
        <div />
        <InfoRow>
          <span>X</span>
          <span>n/a</span>
        </InfoRow>
        <InfoRow>
          <span>W</span>
          <span>n/a</span>
        </InfoRow>
        <InfoRow>
          <span>Y</span>
          <span>n/a</span>
        </InfoRow>
        <InfoRow>
          <span>H</span>
          <span>n/a</span>
        </InfoRow>
      </InfoGrid>
      <ComboGrid>
        <Combo $h={28} $pl={9}>
          Pixel
          <ComboRight>
            <Chevron size={14} />
          </ComboRight>
        </Combo>
        <Combo $h={28} $pl={9}>
          RGB (0..255)
          <ComboRight>
            <Chevron size={14} />
          </ComboRight>
        </Combo>
      </ComboGrid>
      <InfoGrid $row={18}>
        {["R:", "G:", "B:", "A:"].flatMap((k) =>
          [0, 1].map((c) => (
            <InfoRow key={k + c}>
              <span>{k}</span>
              <span>n/a</span>
            </InfoRow>
          ))
        )}
      </InfoGrid>
    </PointerPanel>
  </RightDock>
);

const Annotations = () => (
  <>
    <Overlay width="1057" height="796" viewBox="0 0 1057 796">
      <g stroke="#ff0000" fill="#ff0000" strokeLinecap="round">
        <path d="M288 525L288 485" strokeWidth="5" />
        <path d="M287 465L297 487L278 487Z" strokeWidth="1" />
        <path d="M381 532L498 228" strokeWidth="5" />
        <path d="M508 207L511 234L491 226Z" strokeWidth="1" />
        <path d="M953 318L1027 72" strokeWidth="5" />
        <path d="M1033 50L1038 72L1019 66Z" strokeWidth="1" />
      </g>
    </Overlay>
    <Note $l={156} $t={532} $ls={1}>
      {"The usual color dialog\nobtained by clicking\nthe FG/BG swatches"}
    </Note>
    <Note $l={795} $t={318} $ls={1}>
      {'Dockable color dialog.\nClick this icon and\n"Add tab > Colors"\nto add it.'}
    </Note>
  </>
);

const App: React.FC = () => {
  return (
    <Desktop>
      <GlobalStyle />
      <Ruler />
      <ColorDialog />
      <ToolWindow>
        <DarkTitle>
          <TitleIcon $l={8} $t={5}>
            <Wilber />
          </TitleIcon>
          <span>Toolbox - Layers - Images - Errors | FG/BG - Pointer</span>
          <TitleBtns $right={12}>
            <WhiteDot>
              <svg width="14" height="14" viewBox="0 0 14 14">
                <path d="M2 7l5-5 5 5M2 12l5-5 5 5" fill="none" stroke="#464f58" strokeWidth="1.3" />
              </svg>
            </WhiteDot>
            <Chevron color="#f4f5f5" />
            <Chevron d="up" color="#f4f5f5" />
            <svg width="12" height="12" viewBox="0 0 12 12">
              <path d="M2 2l8 8M10 2l-8 8" stroke="#f4f5f5" strokeWidth="1.4" />
            </svg>
          </TitleBtns>
        </DarkTitle>
        <Columns>
          <LeftColumn />
          <RightColumn />
        </Columns>
      </ToolWindow>
      <Annotations />
    </Desktop>
  );
};

export default App;
